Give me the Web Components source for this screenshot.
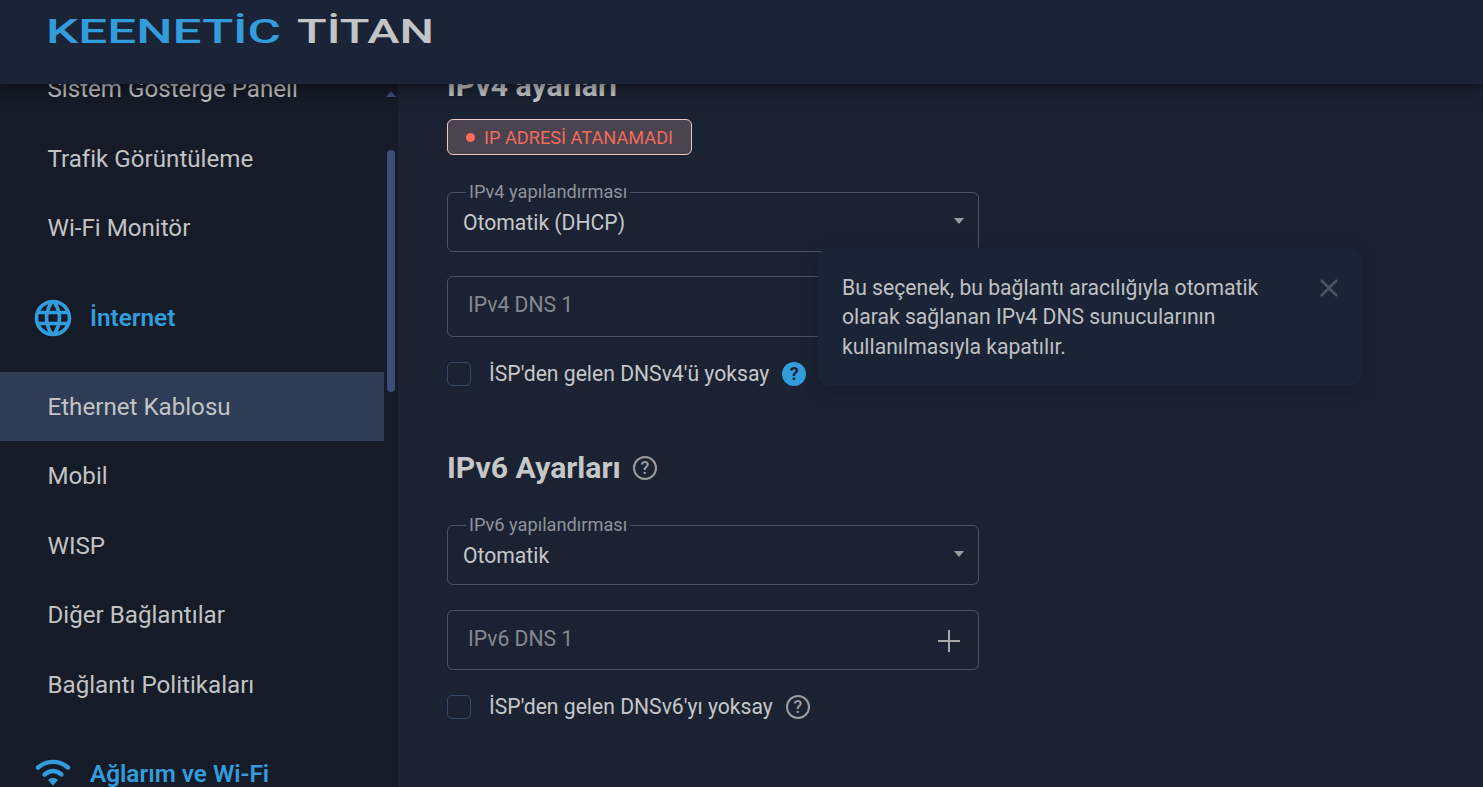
<!DOCTYPE html>
<html lang="tr">
<head>
<meta charset="utf-8">
<title>Keenetic Titan</title>
<style>
    html, body { margin: 0; height: 100%; overflow: hidden; background: #1b2333; }
    body { font-family: Roboto, "Liberation Sans", sans-serif; color: #c6c7c9; }
</style>
</head>
<body>

<kn-shell>
    <kn-header slot="top"></kn-header>
    <kn-sidenav slot="side">
        <kn-navitem>Sistem Gösterge Paneli</kn-navitem>
        <kn-navitem>Trafik Görüntüleme</kn-navitem>
        <kn-navitem>Wi-Fi Monitör</kn-navitem>
        <kn-navgroup icon="globe">İnternet</kn-navgroup>
        <kn-navitem active>Ethernet Kablosu</kn-navitem>
        <kn-navitem>Mobil</kn-navitem>
        <kn-navitem>WISP</kn-navitem>
        <kn-navitem>Diğer Bağlantılar</kn-navitem>
        <kn-navitem>Bağlantı Politikaları</kn-navitem>
        <kn-navgroup icon="wifi">Ağlarım ve Wi-Fi</kn-navgroup>
    </kn-sidenav>
    <kn-page slot="main">
        <kn-title first>IPv4 ayarları</kn-title>
        <kn-status>IP ADRESİ ATANAMADI</kn-status>
        <kn-select style="margin-bottom:24px" label="IPv4 yapılandırması" value="Otomatik (DHCP)"></kn-select>
        <kn-dns style="height:61px" placeholder="IPv4 DNS 1"></kn-dns>
        <kn-check help="active">İSP'den gelen DNSv4'ü yoksay</kn-check>
        <kn-title help>IPv6 Ayarları</kn-title>
        <kn-select label="IPv6 yapılandırması" value="Otomatik"></kn-select>
        <kn-dns placeholder="IPv6 DNS 1"></kn-dns>
        <kn-check help="outline">İSP'den gelen DNSv6'yı yoksay</kn-check>
        <kn-hint slot="over">Bu seçenek, bu bağlantı aracılığıyla otomatik olarak sağlanan IPv4 DNS sunucularının kullanılmasıyla kapatılır.</kn-hint>
    </kn-page>
</kn-shell>

<script>
// small helper, every element just sets its shadow html once
class Base extends HTMLElement {
    constructor() {
        super();
        this.attachShadow({ mode: 'open' });
    }
    connectedCallback() {
        this.shadowRoot.innerHTML = this.render();
    }
}

class KnShell extends Base {
    render() {
        return `<style>
            :host { display: grid; grid-template-rows: 84px 1fr; grid-template-columns: 398px 1fr; height: 787px; overflow: hidden; }
            .top { grid-column: 1 / 3; position: relative; z-index: 5; }
            .side, .main { overflow: hidden; min-height: 0; }
        </style>
        <div class="top"><slot name="top"></slot></div>
        <div class="side"><slot name="side"></slot></div>
        <div class="main"><slot name="main"></slot></div>`;
    }
}

class KnHeader extends Base {
    render() {
        return `<style>
            :host { display: block; height: 84px; background: #1b2436; box-shadow: 0 4px 16px rgba(0,0,0,.5); }
            svg { display: block; }
            text { font-family: Roboto, sans-serif; font-size: 33px; font-weight: 500; }
        </style>
        <svg width="500" height="84">
            <text x="46" y="43" textLength="235" lengthAdjust="spacingAndGlyphs" fill="#339cdc">KEENETİC</text>
            <text x="297" y="43" textLength="137" lengthAdjust="spacingAndGlyphs" fill="#c3c4c6">TİTAN</text>
        </svg>`;
    }
}

class KnSidenav extends Base {
    render() {
        return `<style>
            :host { display: flex; height: 100%; background: #151b27; overflow: hidden; }
            .list { width: 384px; flex: none; margin-top: -29.5px; }
            .track { width: 14px; display: flex; flex-direction: column; align-items: center; padding-top: 7px; box-sizing: border-box; }
            .up { width: 0; height: 0; border: 5px solid transparent; border-top: 0; border-bottom: 6px solid #3b4d74; }
            .thumb { width: 8px; height: 242px; margin-top: 53px; border-radius: 4px; background: #3b4d74; }
        </style>
        <div class="list"><slot></slot></div>
        <div class="track"><div class="up"></div><div class="thumb"></div></div>`;
    }
}

class KnNavitem extends Base {
    render() {
        return `<style>
            :host { display: flex; align-items: center; height: 69.6px; padding-left: 47.5px; font-size: 24.15px; color: #c2c3c5; }
            :host([active]) { background: #2e3c56; }
        </style><slot></slot>`;
    }
}

const NAV_ICONS = {
    globe: `<svg width="44" height="44" viewBox="0 0 24 24" fill="#339cdc"><path d="M11.99 2C6.47 2 2 6.48 2 12s4.47 10 9.99 10C17.52 22 22 17.52 22 12S17.52 2 11.99 2zm6.93 6h-2.95c-.32-1.25-.78-2.45-1.38-3.56 1.84.63 3.37 1.91 4.33 3.56zM12 4.04c.83 1.2 1.48 2.53 1.91 3.96h-3.82c.43-1.43 1.08-2.76 1.91-3.96zM4.26 14C4.1 13.36 4 12.69 4 12s.1-1.36.26-2h3.38c-.08.66-.14 1.32-.14 2 0 .68.06 1.34.14 2H4.26zm.82 2h2.95c.32 1.25.78 2.45 1.38 3.56-1.84-.63-3.37-1.9-4.33-3.56zm2.95-8H5.08c.96-1.66 2.49-2.93 4.33-3.56C8.81 5.55 8.35 6.75 8.03 8zM12 19.96c-.83-1.2-1.48-2.53-1.91-3.96h3.82c-.43 1.43-1.08 2.76-1.91 3.96zM14.34 14H9.66c-.09-.66-.16-1.32-.16-2 0-.68.07-1.35.16-2h4.68c.09.65.16 1.32.16 2 0 .68-.07 1.34-.16 2zm.25 5.56c.6-1.11 1.06-2.31 1.38-3.56h2.95c-.96 1.65-2.49 2.93-4.33 3.56zM16.36 14c.08-.66.14-1.32.14-2 0-.68-.06-1.34-.14-2h3.38c.16.64.26 1.31.26 2s-.1 1.36-.26 2h-3.38z"/></svg>`,
    wifi: `<svg width="44" height="44" viewBox="0 0 44 44" fill="none" stroke="#339cdc" stroke-width="4.4" stroke-linecap="round"><path d="M7 15.5 C16 8 28 8 37 15.5"/><path d="M13.5 22.5 C19 18 25 18 30.5 22.5"/><path d="M18 28 Q22 25 26 28 L22 32.5 Z" fill="#339cdc" stroke-width="1.5" stroke-linejoin="round"/></svg>`
};

class KnNavgroup extends Base {
    render() {
        return `<style>
            :host { display: flex; align-items: center; height: 108.6px; padding-left: 31px; gap: 15px; font-size: 24.3px; font-weight: 600; color: #339cdc; }
            svg { display: block; flex: none; }
            span { margin-top: -1px; }
        </style>${NAV_ICONS[this.getAttribute('icon')]}<span><slot></slot></span>`;
    }
}

class KnPage extends Base {
    render() {
        return `<style>
            :host { display: flow-root; position: relative; height: 100%; background: #1b2333; }
            .col { width: 532px; margin-left: 49px; margin-top: -18.5px; display: flex; flex-direction: column; }
            .over { position: absolute; left: 420px; top: 164px; }
        </style>
        <div class="col"><slot></slot></div>
        <div class="over"><slot name="over"></slot></div>`;
    }
}

class KnHelp extends Base {
    render() {
        return `<style>
            :host { display: inline-flex; align-items: center; justify-content: center; box-sizing: border-box; width: 24px; height: 24px; border-radius: 50%; border: 2.4px solid #9b9c9e; color: #9b9c9e; font: 500 18px/1 Roboto, sans-serif; flex: none; }
            :host([active]) { background: #339cdc; border-color: #339cdc; color: #16202f; font-weight: 700; }
        </style>?`;
    }
}

class KnTitle extends Base {
    render() {
        const help = this.hasAttribute('help') ? '<kn-help></kn-help>' : '';
        return `<style>
            :host { display: flex; align-items: center; gap: 12px; height: 40px; font-size: 30.2px; font-weight: 700; color: #c6c7c9; }
            :host([first]) { margin-bottom: 13.5px; }
            :host([help]) { margin: 62px 0 37px; }
            span { margin-top: -1px; }
        </style><span><slot></slot></span>${help}`;
    }
}

class KnStatus extends Base {
    render() {
        return `<style>
            :host { display: flex; align-items: center; box-sizing: border-box; align-self: flex-start; height: 36px; width: 245px; margin-bottom: 37px; padding-left: 18px; gap: 9px; border: 1px solid #ecc9c2; border-radius: 6px; background: #4a4450; color: #ef6b5b; font-size: 18.2px; white-space: nowrap; }
            i { width: 9px; height: 9px; border-radius: 50%; background: #ff6b57; flex: none; }
            span { margin-top: 1px; }
        </style><i></i><span><slot></slot></span>`;
    }
}

class KnSelect extends Base {
    render() {
        return `<style>
            :host { display: flex; align-items: center; justify-content: space-between; position: relative; box-sizing: border-box; height: 60px; margin-bottom: 25px; padding: 0 15px; border: 1px solid #4a5365; border-radius: 6px; font-size: 21.15px; color: #c6c7c9; }
            label { position: absolute; left: 18px; top: -11px; padding: 0 3px; background: #1b2333; font-size: 18.2px; line-height: 19px; color: #8f939b; }
            span { margin-top: 1px; }
            i { width: 0; height: 0; border: 5px solid transparent; border-bottom: 0; border-top: 6px solid #9a9c9f; margin-right: -1px; margin-top: -3px; }
        </style><label>${this.getAttribute('label')}</label><span>${this.getAttribute('value')}</span><i></i>`;
    }
}

class KnDns extends Base {
    render() {
        return `<style>
            :host { display: flex; align-items: center; justify-content: space-between; box-sizing: border-box; height: 60px; margin-bottom: 25px; padding: 0 17px 0 20px; border: 1px solid #4a5365; border-radius: 6px; font-size: 21.15px; color: #85898f; }
            span { margin-top: -4px; }
            svg { display: block; margin-top: 2px; }
        </style><span>${this.getAttribute('placeholder')}</span>
        <svg width="24" height="24" viewBox="0 0 24 24" stroke="#a6a8ab" stroke-width="2"><path d="M12 1v22M1 12h22"/></svg>`;
    }
}

class KnCheck extends Base {
    render() {
        const kind = this.getAttribute('help');
        return `<style>
            :host { display: flex; align-items: center; height: 24px; font-size: 21.15px; color: #c6c7c9; }
            i { box-sizing: border-box; width: 24px; height: 24px; border: 1px solid #344766; border-radius: 5px; margin-right: 18px; flex: none; }
            span { margin-top: -1px; }
            kn-help { margin-left: 13px; }
        </style><i></i><span><slot></slot></span><kn-help ${kind === 'active' ? 'active' : ''}></kn-help>`;
    }
}

class KnHint extends Base {
    render() {
        return `<style>
            :host { display: flex; justify-content: space-between; box-sizing: border-box; width: 544px; height: 138px; padding: 25px 22px 0 24px; border-radius: 12px; background: #1b2435; box-shadow: 0 4px 16px rgba(0,0,0,.22); font-size: 21.15px; line-height: 29.3px; color: #bfc0c3; }
            .txt { width: 440px; }
            svg { display: block; margin-top: 4px; flex: none; }
        </style><div class="txt"><slot></slot></div>
        <svg width="22" height="22" viewBox="0 0 22 22" stroke="#4c525e" stroke-width="2.6"><path d="M3 3l16 16M19 3L3 19"/></svg>`;
    }
}

customElements.define('kn-shell', KnShell);
customElements.define('kn-header', KnHeader);
customElements.define('kn-sidenav', KnSidenav);
customElements.define('kn-navitem', KnNavitem);
customElements.define('kn-navgroup', KnNavgroup);
customElements.define('kn-page', KnPage);
customElements.define('kn-help', KnHelp);
customElements.define('kn-title', KnTitle);
customElements.define('kn-status', KnStatus);
customElements.define('kn-select', KnSelect);
customElements.define('kn-dns', KnDns);
customElements.define('kn-check', KnCheck);
customElements.define('kn-hint', KnHint);
</script>
</body>
</html>
